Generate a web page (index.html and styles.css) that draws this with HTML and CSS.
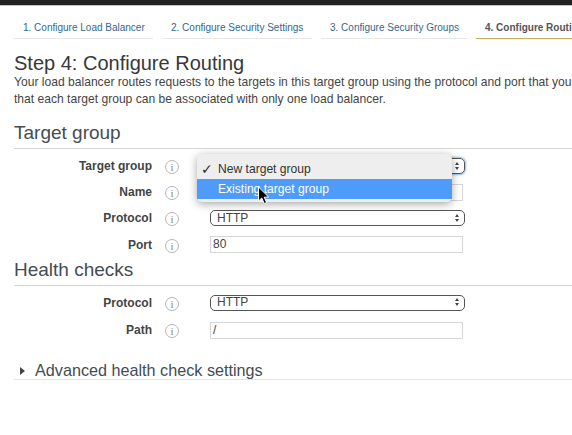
FILE: index.html
```html
<!DOCTYPE html>
<html lang="en">
<head>
    <meta charset="UTF-8">
    <title>Step 4: Configure Routing</title>
    <link rel="stylesheet" href="styles.css">
</head>
<body>
    <div class="topbar"></div>
    <ul class="tabs">
        <li class="tab tab-1">1. Configure Load Balancer</li>
        <li class="tab tab-2">2. Configure Security Settings</li>
        <li class="tab tab-3">3. Configure Security Groups</li>
        <li class="tab tab-4 active">4. Configure Routing</li>
    </ul>
    <div class="content">
        <h1>Step 4: Configure Routing</h1>
        <p class="intro">Your load balancer routes requests to the targets in this target group using the protocol and port that you<br>that each target group can be associated with only one load balancer.</p>

        <h2 class="section first">Target group</h2>
        <div class="form">
            <div class="row row-tg">
                <label>Target group</label>
                <span class="info">i</span>
                <div class="select focused"><span></span><span class="arrows"><i class="up"></i><i class="down"></i></span></div>
            </div>
            <div class="row row-name">
                <label>Name</label>
                <span class="info">i</span>
                <div class="input"></div>
            </div>
            <div class="row row-proto">
                <label>Protocol</label>
                <span class="info">i</span>
                <div class="select"><span>HTTP</span><span class="arrows"><i class="up"></i><i class="down"></i></span></div>
            </div>
            <div class="row row-port">
                <label>Port</label>
                <span class="info">i</span>
                <div class="input">80</div>
            </div>
        </div>

        <h2 class="section">Health checks</h2>
        <div class="form form-health">
            <div class="row row-proto2">
                <label>Protocol</label>
                <span class="info">i</span>
                <div class="select"><span>HTTP</span><span class="arrows"><i class="up"></i><i class="down"></i></span></div>
            </div>
            <div class="row row-path">
                <label>Path</label>
                <span class="info">i</span>
                <div class="input">/</div>
            </div>
        </div>

        <div class="advanced"><span class="caret"></span>Advanced health check settings</div>
    </div>

    <!-- open native select menu -->
    <div class="menu">
        <div class="menu-item"><span class="check">✓</span>New target group</div>
        <div class="menu-item selected">Existing target group</div>
    </div>
    <svg class="cursor" width="14" height="20" viewBox="0 0 14 20">
        <path d="M1.5 1 L1.5 15 L4.8 12 L7.2 17.6 L9.6 16.5 L7.2 11.2 L11.6 11 Z" fill="#000" stroke="#fff" stroke-width="1"/>
    </svg>
</body>
</html>
```
FILE: styles.css
```css
html, body {
    height: 100%;
}

body {
    margin: 0;
    width: 572px;
    overflow: hidden;
    position: relative;
    background-color: #ffffff;
    color: #333333;
    font-family: "Liberation Sans", Arial, sans-serif;
}

.topbar {
    height: 5px;
    background-color: #232323;
    border-bottom: 1px solid #c4c4c4;
}

/* wizard tabs */
.tabs {
    display: flex;
    gap: 9px;
    list-style: none;
    margin: 0;
    padding: 11px 0 0 14px;
    white-space: nowrap;
}

.tab {
    flex-shrink: 0;
    box-sizing: border-box;
    height: 22px;
    padding: 5px 0 0 9px;
    font-size: 10px;
    color: #31688f;
    border-bottom: 1px solid #e8e8e8;
}

.tab-1 { width: 139px; }
.tab-2 { width: 150px; }
.tab-3 { width: 146px; }
.tab-4 { width: 160px; }

.tab.active {
    color: #555555;
    font-weight: bold;
    border-bottom: 1px solid #c9ae56;
}

.content {
    padding-left: 14px;
    white-space: nowrap;
}

h1 {
    margin: 12px 0 0;
    font-size: 20px;
    line-height: 24px;
    font-weight: normal;
    color: #383838;
}

.intro {
    margin: -1px 0 0;
    font-size: 12.1px;
    line-height: 17px;
    color: #444444;
}

.section {
    margin: 0;
    height: 27px;
    font-size: 19px;
    line-height: 24px;
    font-weight: normal;
    color: #444c54;
    border-bottom: 1px solid #d5d5d5;
}

.section.first {
    margin-top: 13px;
}

.form {
    padding-top: 4px;
}

.form-health {
    padding-top: 3px;
}

.row {
    display: flex;
    align-items: center;
    height: 26px;
}

.row label {
    width: 138px;
    text-align: right;
    font-size: 12px;
    font-weight: bold;
    color: #444444;
}

.info {
    box-sizing: border-box;
    width: 14px;
    height: 14px;
    margin-left: 13px;
    margin-top: 2px;
    border: 1px solid #b4b4b4;
    border-radius: 50%;
    font-family: "Liberation Serif", serif;
    font-size: 11px;
    line-height: 12px;
    text-align: center;
    color: #888888;
}

.select {
    box-sizing: border-box;
    display: flex;
    align-items: center;
    justify-content: space-between;
    width: 255px;
    height: 16px;
    margin-left: 31px;
    padding: 0 5px 1px 6px;
    border: 1px solid #555555;
    border-radius: 5px;
    font-size: 12px;
    color: #444444;
}

.select.focused {
    box-shadow: 0 0 2px 1px #8db8dd;
}

.arrows {
    display: flex;
    flex-direction: column;
    gap: 2px;
}

.arrows i {
    display: block;
    border-left: 2.5px solid transparent;
    border-right: 2.5px solid transparent;
}

.arrows .up {
    border-bottom: 3.5px solid #444444;
}

.arrows .down {
    border-top: 3.5px solid #444444;
}

.input {
    box-sizing: border-box;
    width: 253px;
    height: 17px;
    margin-left: 31px;
    padding-left: 2px;
    border: 1px solid #d6d6d6;
    font-size: 12px;
    line-height: 15px;
    color: #444444;
}

.row-port { height: 27px; }

.row-proto2 { height: 27px; }
.row-path { height: 28px; }

.advanced {
    display: flex;
    align-items: center;
    box-sizing: border-box;
    height: 25px;
    margin-top: 11px;
    padding-top: 7px;
    font-size: 16.2px;
    color: #444c54;
    border-bottom: 1px solid #e4e4e4;
}

.caret {
    width: 0;
    height: 0;
    margin: 0 10px 0 6px;
    border-left: 5px solid #444444;
    border-top: 4px solid transparent;
    border-bottom: 4px solid transparent;
}

.menu {
    position: absolute;
    left: 197px;
    top: 154px;
    width: 255px;
    height: 48px;
    padding-top: 5px;
    box-sizing: border-box;
    border-radius: 5px;
    background-color: #eeeeee;
    box-shadow: 0 2px 8px rgba(0, 0, 0, 0.35);
    font-size: 12.1px;
    color: #333333;
}

.menu-item {
    position: relative;
    height: 20px;
    padding-left: 21px;
    line-height: 21px;
}

.menu-item.selected {
    background-color: #4f9bfb;
    color: #ffffff;
}

.check {
    position: absolute;
    left: 4px;
    font-family: "DejaVu Sans", sans-serif;
    font-size: 14px;
    font-weight: bold;
}

.cursor {
    position: absolute;
    left: 257px;
    top: 186px;
}
```
